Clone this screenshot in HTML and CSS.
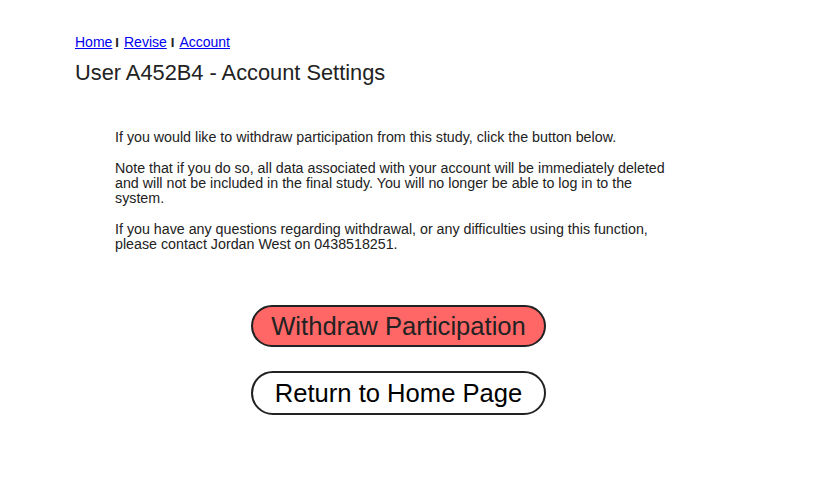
FILE: index.html
```html
<!DOCTYPE html>
<html>
<head>
<meta charset="utf-8">
<link rel="stylesheet" href="styles.css">
</head>
<body>
<div class="page">
  <nav class="nav">
    <a href="#">Home</a><span class="sep">I</span><a href="#">Revise</a><span class="sep sep-2">I</span><a href="#">Account</a>
  </nav>
  <h1 class="title">User A452B4 - Account Settings</h1>
  <section class="content">
    <p>If you would like to withdraw participation from this study, click the button below.</p>
    <p>Note that if you do so, all data associated with your account will be immediately deleted and will not be included in the final study. You will no longer be able to log in to the system.</p>
    <p>If you have any questions regarding withdrawal, or any difficulties using this function, please contact Jordan West on 0438518251.</p>
    <div class="actions">
      <button class="btn btn-danger">Withdraw Participation</button>
      <button class="btn btn-plain">Return to Home Page</button>
    </div>
  </section>
</div>
</body>
</html>
```
FILE: styles.css
```css
html, body {
  margin: 0;
  padding: 0;
  background: #fff;
}
body {
  font-family: "Liberation Sans", Arial, sans-serif;
  color: #222;
}
.page {
  padding: 34px 0 0 75px;
}
.nav {
  font-size: 14px;
  line-height: 16px;
}
.nav a {
  color: #0000ee;
  text-decoration: underline;
}
.sep {
  font-weight: bold;
  color: #222;
  font-size: 13px;
  margin: 0 5px 0 3px;
}
.sep-2 {
  margin: 0 5px 0 4px;
}
.title {
  font-size: 21.8px;
  font-weight: normal;
  line-height: 23px;
  margin: 10px 0 0 0;
}
.content {
  margin: 46px 0 0 40px;
  width: 567px;
}
.content p {
  font-size: 14.25px;
  line-height: 15px;
  margin: 0 0 16px 0;
}
.actions {
  margin-top: 53px;
  display: flex;
  flex-direction: column;
  align-items: center;
  gap: 24px;
}
.btn {
  width: 295px;
  height: 42px;
  border: 2px solid #222;
  border-radius: 21px;
  font-family: "Liberation Sans", Arial, sans-serif;
  font-size: 25.6px;
  padding: 0;
  cursor: pointer;
}
.btn-danger {
  background: #ff6666;
  color: #222;
}
.btn-plain {
  background: #fff;
  color: #000;
  height: 44px;
  border-radius: 22px;
}
```
